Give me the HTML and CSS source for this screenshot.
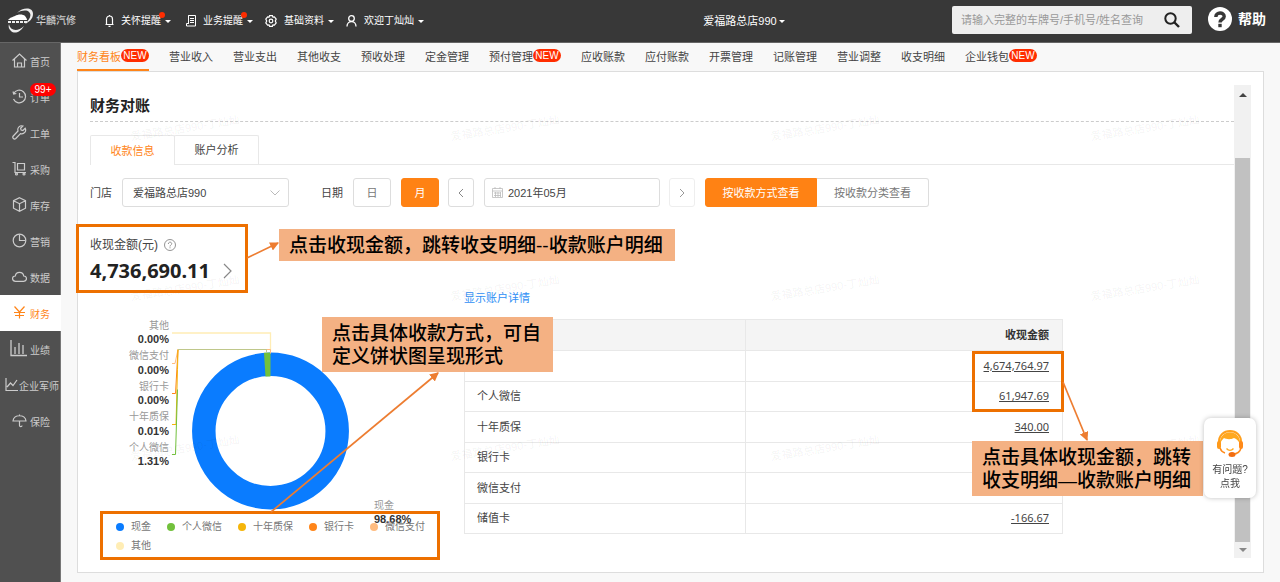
FILE: index.html
```html
<!DOCTYPE html>
<html lang="zh-CN">
<head>
<meta charset="utf-8">
<meta name="viewport" content="width=device-width, initial-scale=1">
<title>财务对账</title>
<link rel="stylesheet" href="styles.css">
</head>
<body>
<header class="topbar">
  <div class="topbar-left">
    <div class="brand">
      <svg class="brand-mark" width="26" height="26" viewBox="0 0 26 26">
        <path d="M9 5C15-1 25-1 25 6c0 5-4 8-8 10 5-5 7-9 4-12-2-2-7-2-12 1z" fill="#eee"/>
        <path d="M1 11c2-2 4-2 6-3 3-2 8-2 10 0 1 1 2 3 2 4H0z" fill="#fff"/>
        <path d="M0 14h19" stroke="#eee" stroke-width="2" stroke-dasharray="3 1"/>
        <path d="M1 16c1 7 9 8 15 2-4 7-10 8-13 5-2-2-3-4-2-7z" fill="#eee"/>
      </svg>
      <span>华麟汽修</span>
    </div>
    <button class="top-item top-bell" type="button">
      <svg width="9" height="12" viewBox="0 0 9 12" fill="none" stroke="#fff" stroke-width="1.200"><path d="M1.500 9V4a3 3 0 0 1 6 0v5M.500 9.500h8M4.500 0v1M3.500 11.300h2"/></svg>
      <span class="dotted">关怀提醒</span><i class="caret"></i>
    </button>
    <button class="top-item top-list" type="button">
      <svg width="10" height="12" viewBox="0 0 10 12" fill="none" stroke="#fff"><path d="M2.500.500h7v10.500h-9V8.500h2zM2.500.500v8.500M4 3.500h4M4 5.500h4M4 7.500h4"/></svg>
      <span class="dotted">业务提醒</span><i class="caret"></i>
    </button>
    <button class="top-item top-gear" type="button">
      <svg width="12" height="12" viewBox="0 0 12 12" fill="none" stroke="#fff" stroke-width="1.200"><path d="M4.600.600h2.800l.5 1.500 1.500-.3 1.800 2.300-.9 1.900.9 1.900-1.800 2.300-1.500-.3-.5 1.500H4.600l-.5-1.500-1.500.3L.8 7.900 1.700 6 .8 4.100l1.800-2.300 1.500.3z"/><circle cx="6" cy="6" r="1.800"/></svg>
      <span>基础资料</span><i class="caret"></i>
    </button>
    <button class="top-item" type="button">
      <svg width="11" height="12" viewBox="0 0 11 12" fill="none" stroke="#fff" stroke-width="1.300"><circle cx="5.500" cy="3.500" r="2.800"/><path d="M1 11.500c0-3 2-5 4.500-5s4.500 2 4.500 5"/></svg>
      <span>欢迎丁灿灿</span><i class="caret"></i>
    </button>
  </div>
  <button class="store-switch" type="button">爱福路总店990<i class="caret"></i></button>
  <div class="topbar-right">
    <form class="search">
      <input type="text" aria-label="查询" placeholder="请输入完整的车牌号/手机号/姓名查询">
      <button type="button" aria-label="搜索"><svg width="16" height="16" viewBox="0 0 16 16" fill="none" stroke="#222" stroke-width="2"><circle cx="6.500" cy="6.500" r="5.200"/><path d="M10.500 10.500l4.500 4.500" stroke-width="2.400"/></svg></button>
    </form>
    <a class="help" href="#">
      <svg width="24" height="24" viewBox="0 0 24 24"><circle cx="12" cy="12" r="12" fill="#fff"/><path d="M7.800 10C7.800 4.800 16.200 4.800 16.200 9.500c0 3-4.200 2.500-4.200 6" fill="none" stroke="#383838" stroke-width="3.400"/><rect x="10.300" y="16.800" width="3.400" height="3.400" fill="#383838"/></svg>
      <span>帮助</span>
    </a>
  </div>
</header>

<div class="body">
  <nav class="side">
    <a href="#"><svg width="15" height="15" viewBox="0 0 15 15"><path d="M.500 7.500l7-6.500 7 6.500M2.500 6v8h10V6M5.500 14v-4h4v4"/></svg>首页</a>
    <a href="#"><svg width="15" height="15" viewBox="0 0 15 15"><path d="M1.700 4.500A6.300 6.300 0 1 1 1.500 10M1 2.500l.7 2.500 2.600-.5M7.500 4v4H11"/></svg>订单<b class="count">99+</b></a>
    <a href="#"><svg width="15" height="15" viewBox="0 0 15 15"><path d="M13.200 3.300l-2.300 2.200-1.800-.4-.5-1.900L10.900 1C8 0 5 2.500 6 6L1.300 11c-1.500 1.800.8 4 2.500 2.500L8.500 8.600c3.600 1 6.200-2.300 4.700-5.300z"/></svg>工单</a>
    <a href="#"><svg width="15" height="15" viewBox="0 0 15 15"><path d="M.500 1.500H3v10h11M5.500 2.500h7v6.500h-7z"/><circle cx="4.500" cy="13" r="1"/><circle cx="12" cy="13" r="1"/></svg>采购</a>
    <a href="#"><svg width="15" height="15" viewBox="0 0 15 15"><path d="M7.500.700l6 3v7.500l-6 3.100-6-3.100V3.700zM1.500 3.700l6 3 6-3M7.500 6.700v7.500"/></svg>库存</a>
    <a href="#"><svg width="15" height="15" viewBox="0 0 15 15"><circle cx="7.500" cy="7.500" r="6.300"/><path d="M7.500 1.500v6h6"/></svg>营销</a>
    <a href="#"><svg width="15" height="15" viewBox="0 0 15 15"><path d="M3.500 12.300C-.5 12-.3 7 3.300 7 4 2.200 11 2.200 11.700 7c3.600 0 3.800 5 0 5.300z"/></svg>数据</a>
    <a href="#" class="active"><svg width="15" height="15" viewBox="0 0 15 15"><path d="M2.500 1.500l5 5.500 5-5.500M2 7.500h11M3 10.500h9M7.500 7v6.500"/></svg>财务</a>
    <a href="#" class="wide"><svg width="17" height="17" viewBox="0 0 17 17"><path d="M1 0v15.500h16M5 14V7M9 14V3M13 14V5" stroke-width="1.300"/></svg>业绩</a>
    <a href="#" class="widest"><svg width="13" height="15" viewBox="0 0 13 15"><path d="M1 1v12.500h12M2 10l3.500-4 2.500 2.500 4-5.500"/></svg>企业军师</a>
    <a href="#"><svg width="15" height="15" viewBox="0 0 15 15"><path d="M1 8C1.500 1 13.500 1 14 8zM7.500 1.500V3M7.500 8v4.500c0 1.500 2.500 1.500 2.500 0"/></svg>保险</a>
  </nav>

  <main class="main">
    <nav class="tabs">
      <a href="#" class="on">财务看板<em>NEW</em></a>
      <a href="#">营业收入</a><a href="#">营业支出</a><a href="#">其他收支</a><a href="#">预收处理</a><a href="#">定金管理</a>
      <a href="#">预付管理<em>NEW</em></a>
      <a href="#">应收账款</a><a href="#">应付账款</a><a href="#">开票管理</a><a href="#">记账管理</a><a href="#">营业调整</a><a href="#">收支明细</a>
      <a href="#">企业钱包<em>NEW</em></a>
    </nav>
    <section class="panel">
      <div class="content">
        <h1>财务对账</h1>
        <div class="subtabs">
          <button type="button" class="on">收款信息</button><button type="button">账户分析</button>
        </div>
        <form class="filters">
          <label for="store">门店</label>
          <span class="select"><select id="store"><option>爱福路总店990</option></select><svg width="10" height="6" viewBox="0 0 10 6"><path d="M.500.500L5 5 9.500.500" fill="none" stroke="#bbb"/></svg></span>
          <label for="month" class="date-label">日期</label>
          <button type="button" class="unit">日</button>
          <button type="button" class="unit primary">月</button>
          <button type="button" class="step" aria-label="上个月"><svg width="6" height="10" viewBox="0 0 6 10"><path d="M5 1L1 5l4 4" fill="none" stroke="#888"/></svg></button>
          <span class="date"><svg width="11" height="11" viewBox="0 0 11 11" fill="none" stroke="#bbb"><path d="M.500 1.500h10v9H.500zM.500 4h10M3 0v2M8 0v2M2 6h7M2 8.500h7M3.500 5v5M6 5v5M8.500 5v5" stroke-width=".8"/></svg><input id="month" type="text" value="2021年05月"></span>
          <button type="button" class="step faint" aria-label="下个月"><svg width="6" height="10" viewBox="0 0 6 10"><path d="M1 1l4 4-4 4" fill="none" stroke="#999"/></svg></button>
          <span class="modes"><button type="button" class="primary">按收款方式查看</button><button type="button">按收款分类查看</button></span>
        </form>

        <div class="report">
          <div class="overview">
            <div class="summary">
              <p>收现金额(元)<svg width="12" height="12" viewBox="0 0 12 12" fill="none" stroke="#888" stroke-width=".9"><circle cx="6" cy="6" r="5.500"/><path d="M4.300 5c0-2.400 3.400-2.400 3.400-.3C7.700 6 6 6 6 7.500M6 8.300v1"/></svg></p>
              <strong>4,736,690.11<svg width="9" height="16" viewBox="0 0 9 16"><path d="M1 1l7 7-7 7" fill="none" stroke="#888" stroke-width="1.200"/></svg></strong>
            </div>
            <svg class="chart" width="374" height="220" viewBox="90 290 374 220">
              <circle cx="270.500" cy="431" r="66.700" fill="none" stroke="#0a7cff" stroke-width="23.500"/>
              <path d="M264 352.700l1.500 23.800 5 0V352.500z" fill="#72c13c"/>
              <g fill="none">
                <path d="M172 333h98.500v18" stroke="#ffedb5" stroke-width="1.300"/>
                <path d="M172 363.500h3l3-14h92.500v4" stroke="#ffbc80"/>
                <path d="M172 393.500h3.500l2.500-44" stroke="#ff8519"/>
                <path d="M172 424.500h4l1.500-55 .5-20" stroke="#f5b50a"/>
                <path d="M172 454.500h3.500l2-65" stroke="#72c13c"/>
                <path d="M178 349.500h88.500v3" stroke="#bfc78a"/>
              </g>
              <g class="chart-name" text-anchor="end">
                <text x="169" y="329">其他</text><text x="169" y="359">微信支付</text><text x="169" y="390">银行卡</text><text x="169" y="420">十年质保</text><text x="169" y="451">个人微信</text>
              </g>
              <g class="chart-value" text-anchor="end">
                <text x="169" y="343">0.00%</text><text x="169" y="374">0.00%</text><text x="169" y="404">0.00%</text><text x="169" y="435">0.01%</text><text x="169" y="465">1.31%</text>
              </g>
              <text class="chart-name" x="374" y="509">现金</text>
              <text class="chart-value" x="374" y="523">98.68%</text>
            </svg>
            <ul class="legend">
              <li class="c-cash">现金</li><li class="c-wechat">个人微信</li><li class="c-warranty">十年质保</li><li class="c-bank">银行卡</li><li class="c-wepay">微信支付</li><li class="c-other">其他</li>
            </ul>
          </div>
          <div class="detail">
            <a class="toggle" href="#">显示账户详情</a>
            <table>
              <thead><tr><th></th><th>收现金额</th></tr></thead>
              <tbody>
                <tr><td></td><td><a href="#">4,674,764.97</a></td></tr>
                <tr><td>个人微信</td><td><a href="#">61,947.69</a></td></tr>
                <tr><td>十年质保</td><td><a href="#">340.00</a></td></tr>
                <tr><td>银行卡</td><td></td></tr>
                <tr><td>微信支付</td><td></td></tr>
                <tr><td>储值卡</td><td><a href="#">-166.67</a></td></tr>
              </tbody>
            </table>
          </div>
        </div>
      </div>
      <div class="scrollbar" aria-hidden="true"><i class="up"></i><i class="thumb"></i><i class="down"></i></div>
      <div class="watermark" aria-hidden="true">
        <span>爱福路总店990-丁灿灿</span><span>爱福路总店990-丁灿灿</span><span>爱福路总店990-丁灿灿</span><span>爱福路总店990-丁灿灿</span>
        <span>爱福路总店990-丁灿灿</span><span>爱福路总店990-丁灿灿</span><span>爱福路总店990-丁灿灿</span><span>爱福路总店990-丁灿灿</span>
        <span>爱福路总店990-丁灿灿</span><span>爱福路总店990-丁灿灿</span><span>爱福路总店990-丁灿灿</span><span>爱福路总店990-丁灿灿</span>
      </div>
    </section>
  </main>
</div>

<div class="mark mark-total"></div>
<div class="mark mark-legend"></div>
<div class="mark mark-amount"></div>
<svg class="arrows" width="1280" height="582" viewBox="0 0 1280 582">
  <defs><marker id="head" viewBox="0 0 8 8" refX="7" refY="4" markerWidth="9" markerHeight="9" markerUnits="userSpaceOnUse" orient="auto"><path d="M0 0l8 4-8 4z" fill="#ed7d31"/></marker></defs>
  <g stroke="#ed7d31" stroke-width="1.700">
    <path d="M247 258l31-15" marker-end="url(#head)"/><path d="M271 512l167-139" marker-end="url(#head)"/><path d="M1063 382l24 58" marker-end="url(#head)"/>
  </g>
</svg>
<p class="note note-total">点击收现金额，跳转收支明细--收款账户明细</p>
<p class="note note-legend">点击具体收款方式，可自<br>定义饼状图呈现形式</p>
<p class="note note-amount">点击具体收现金额，跳转<br>收支明细—收款账户明细</p>

<button class="service" type="button">
  <svg width="28" height="28" viewBox="0 0 28 28"><path d="M3 13C2-3 26-3 25 13" fill="none" stroke="#ff9f1c" stroke-width="2"/><path d="M4 15C2-2 26-2 24 15c-1-4-3-6-6-7-4 2-8 1-10 0-2 2-3 3-4 7z" fill="#ffa81f"/><rect x="1" y="11" width="4" height="8" rx="2" fill="#ff9a1a"/><rect x="23" y="11" width="4" height="8" rx="2" fill="#ff8a1a"/><path d="M25 18c-1 4-4 6-8 6M4 18c1 3 2 4 5 5" fill="none" stroke="#ff8a1a" stroke-width="1.500"/><ellipse cx="16" cy="24.500" rx="3.500" ry="2.500" fill="#f26d10"/><path d="M10.500 18.500c2 2.500 5 2.500 7 0" fill="none" stroke="#ffa81f" stroke-width="1.300"/></svg>
  <span>有问题?<br>点我</span>
</button>
</body>
</html>
```
FILE: styles.css
```css
* { box-sizing: border-box; }
body {
  margin: 0; min-height: 100vh; display: flex; flex-direction: column; position: relative;
  font: 11px/16px "Liberation Sans", "Noto Sans CJK SC", sans-serif; color: #444; background: #f8f8f8;
}
button, input, select { font: inherit; color: inherit; margin: 0; padding: 0; border: 0; background: none; }
a { color: inherit; text-decoration: none; }
svg { display: block; flex: none; }
p, h1, ul { margin: 0; padding: 0; }

.topbar { height: 43px; display: grid; grid-template-columns: auto 1fr auto; align-items: center; padding: 0 14px 2px 8px; background: #383838; border-bottom: 1px solid #666; color: #fff; font-size: 10px; }
.topbar-left, .brand, .top-item, .topbar-right, .help { display: flex; align-items: center; }
.topbar-left, .store-switch { padding-top: 2px; }
.brand { gap: 2px; color: #ccc; font-weight: 500; margin-right: 29px; }
.top-item { gap: 7px; }
.top-bell { margin-right: 15px; }
.top-list { margin-right: 12px; }
.top-gear { margin-right: 12px; }
.caret { display: inline-block; border: 3px solid transparent; border-top-color: #fff; border-bottom: 0; margin-left: -3px; }
.dotted { position: relative; }
.dotted::after { content: ""; position: absolute; right: -4px; top: -1px; width: 6px; height: 6px; border-radius: 50%; background: #ff2d00; }
.store-switch { justify-self: center; margin-left: 112px; display: flex; align-items: center; gap: 5px; font-size: 11px; }
.topbar-right { gap: 16px; }
.search { display: flex; align-items: center; width: 240px; height: 28px; padding: 0 12px 0 9px; background: #eee; border-radius: 2px; font-size: 11px; color: #333; }
.search input { flex: 1; min-width: 0; outline: 0; }
.search input::placeholder { color: #999; }
.help { gap: 6px; padding-bottom: 2px; font-size: 14px; font-weight: bold; }

.body { flex: 1; display: flex; }
.side { flex: none; width: 61px; background: #505050; color: #ccc; font-size: 10px; border-right: 1px solid #777; }
.side a { position: relative; display: flex; align-items: center; gap: 3px; height: 36px; padding: 4px 0 0 12px; white-space: nowrap; }
.side svg { margin-bottom: 6px; fill: none; stroke: currentColor; stroke-width: 1.2; }
.side .wide { padding-left: 10px; }
.side .widest { padding-left: 5px; gap: 1px; }
.side .active { background: #fff; color: #ff8519; margin-right: -1px; }
.side .count { position: absolute; left: 30px; top: 4px; width: 26px; height: 13px; border-radius: 7px; background: #f00; color: #fff; font-weight: normal; line-height: 13px; text-align: center; }

.main { flex: 1; min-width: 0; display: flex; flex-direction: column; padding: 0 16px 9px; }
.tabs { display: flex; gap: 20px; height: 28px; white-space: nowrap; }
.tabs a { display: flex; line-height: 29px; height: 28px; }
.tabs .on { color: #ff8519; border-bottom: 2px solid #ff8519; }
.tabs em { width: 28px; height: 13px; margin-top: 6px; border-radius: 7px; background: #ff2d00; color: #fff; font-style: normal; font-size: 10px; line-height: 13px; text-align: center; }

.panel { position: relative; flex: 1; display: flex; padding: 13px 12px 14px; background: #fff; border: 1px solid #ddd; overflow: hidden; }
.content { flex: 1; min-width: 0; }
h1 { font-size: 15px; line-height: 20px; color: #222; padding: 11px 0 5px; border-bottom: 1px dashed #ccc; }
.subtabs { display: flex; margin-top: 13px; border-bottom: 1px solid #e8e8e8; }
.subtabs button { width: 85px; height: 29px; border: 1px solid #e8e8e8; border-bottom: 0; border-radius: 2px 2px 0 0; }
.subtabs button + button { margin-left: -1px; }
.subtabs .on { color: #ff8519; background: #fff; margin-bottom: -1px; height: 30px; }
.filters { display: flex; align-items: center; margin-top: 13px; white-space: nowrap; }
.filters button, .select, .date { height: 29px; border: 1px solid #ddd; border-radius: 3px; }
.select { display: flex; align-items: center; width: 167px; margin-left: 10px; padding: 0 8px 0 10px; }
.select select { flex: 1; appearance: none; }
.date-label { margin-left: 32px; }
.filters .unit { width: 38px; margin-left: 10px; color: #777; }
.filters .step { display: grid; place-items: center; width: 26px; margin: 0 10px 0 9px; }
.filters .faint { border-color: #eee; }
.date { display: flex; align-items: center; gap: 5px; width: 176px; padding: 0 8px 0 7px; }
.date input { flex: 1; min-width: 0; }
.modes { display: flex; }
.modes button { width: 112px; color: #777; }
.modes button:first-child { border-radius: 3px 0 0 3px; }
.modes button:last-child { border-radius: 0 3px 3px 0; border-left: 0; }
.filters .primary { background: #ff8214; border-color: #ff8214; color: #fff; }

.report { display: grid; grid-template-columns: 374px minmax(0, 599px); }
.summary { height: 83px; padding-top: 30px; }
.summary p { display: flex; align-items: center; gap: 6px; font-size: 12px; }
.summary strong { display: flex; align-items: center; gap: 13px; font: bold 20px/24px "Noto Sans", "Open Sans", sans-serif; color: #222; margin-top: 6px; }
.chart { overflow: visible; }
.chart-name { font-size: 10px; fill: #999; }
.chart-value { font-size: 11px; font-weight: bold; fill: #333; }
.legend { display: flex; flex-wrap: wrap; column-gap: 16px; list-style: none; padding: 7px 20px 0 26px; font-size: 10px; line-height: 19px; color: #777; }
.legend li { display: flex; align-items: center; gap: 7px; }
.legend li::before { content: ""; width: 8px; height: 8px; border-radius: 50%; background: currentColor; }
.legend .c-cash::before { color: #0a7cff; }
.legend .c-wechat::before { color: #72c13c; }
.legend .c-warranty::before { color: #f5b50a; }
.legend .c-bank::before { color: #ff8519; }
.legend .c-wepay::before { color: #ffbc80; }
.legend .c-other::before { color: #ffedb5; }

.detail { padding-top: 83px; }
.toggle { display: block; color: #2f8ff5; margin-bottom: 13px; }
table { width: 100%; height: 215px; border-collapse: collapse; table-layout: fixed; }
th, td { border: 1px solid #e8e8e8; padding: 0 13px 0 12px; text-align: left; }
th { height: 31px; background: #f4f4f4; color: #333; }
th:first-child { width: 47%; }
th:last-child, td:last-child { text-align: right; }
td a { font-family: "Noto Sans", sans-serif; text-decoration: underline; }

.scrollbar { flex: none; width: 17px; display: flex; flex-direction: column; align-items: center; background: #f1f1f1; }
.scrollbar .up, .scrollbar .down { border: 4px solid transparent; }
.scrollbar .up { border-bottom-color: #444; border-top: 0; margin: 8px 0 61px; }
.scrollbar .down { border-top-color: #888; border-bottom: 0; margin: 6px 0; }
.scrollbar .thumb { flex: 1; width: 15px; background: #c1c1c1; }
.watermark { position: absolute; inset: 18px 29px 0 42px; padding: 30px 0 0 10px; display: grid; grid-template-columns: repeat(4, 320px); grid-auto-rows: 160px; overflow: hidden; pointer-events: none; color: rgba(0, 0, 0, .06); }
.watermark span { justify-self: start; align-self: start; white-space: nowrap; transform: rotate(-9deg); }

.mark { position: absolute; border: 3px solid #ed7000; }
.mark-total { left: 76px; top: 224px; width: 172px; height: 69px; }
.mark-legend { left: 100px; top: 511px; width: 340px; height: 49px; }
.mark-amount { left: 972px; top: 351px; width: 92px; height: 61px; }
.arrows { position: absolute; left: 0; top: 0; pointer-events: none; }
.note { position: absolute; padding: 5px 12px 4px 10px; background: #f4b183; color: #000; font-size: 19px; line-height: 23px; font-weight: 500; white-space: nowrap; }
.note-total { left: 279px; top: 229px; }
.note-legend { left: 322px; top: 317px; }
.note-amount { left: 972px; top: 441px; }
.service { position: fixed; right: 24px; top: 418px; width: 52px; height: 80px; display: flex; flex-direction: column; align-items: center; justify-content: flex-start; gap: 5px; background: #fff; border-radius: 7px; box-shadow: 0 0 5px rgba(0, 0, 0, .25); font-size: 10px; line-height: 14px; padding-top: 12px; }
```
